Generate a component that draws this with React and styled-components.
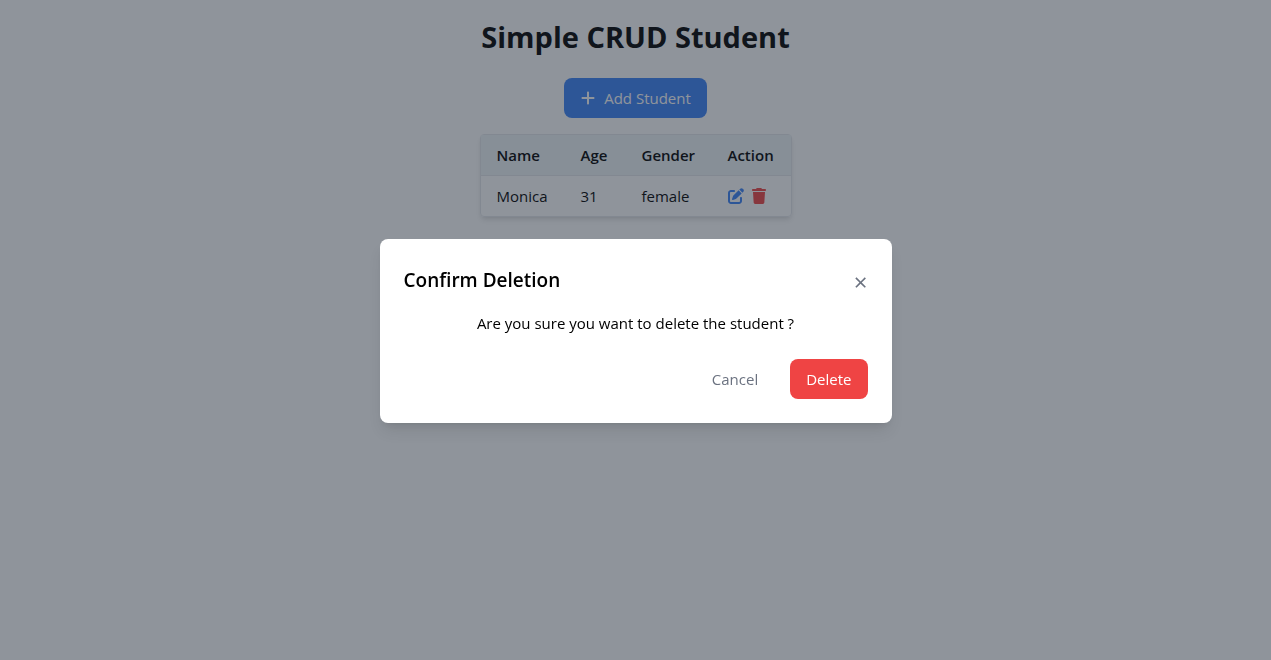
import React from "react";
import styled, { createGlobalStyle } from "styled-components";
import { FaPlus, FaPenToSquare, FaTrash } from "react-icons/fa6";

const GlobalStyle = createGlobalStyle`
  *, *::before, *::after { box-sizing: border-box; }
  body {
    margin: 0;
    background: #ffffff;
    color: #000000;
    font-family: "Segoe UI", "Open Sans", "Noto Sans", sans-serif;
    font-size: 15px;
    line-height: 24px;
  }
  h1, h2, p { margin: 0; }
  button { font: inherit; border: 0; cursor: pointer; }
`;

const Page = styled.main`
  display: flex;
  flex-direction: column;
  align-items: center;
  gap: 16px;
  padding: 16px;
`;

const PageTitle = styled.h1`
  margin-bottom: 4px;
  font-size: 29px;
  font-weight: 700;
  line-height: 42px;
`;

const Button = styled.button`
  display: inline-flex;
  align-items: center;
  gap: 8px;
  height: 40px;
  padding: 0 16px;
  border-radius: 8px;
  color: ${({ $color }) => $color || "#ffffff"};
  background: ${({ $background }) => $background || "transparent"};
`;

const StudentTable = styled.table`
  border-collapse: separate;
  border-spacing: 0;
  border: 1px solid #e5e7eb;
  border-radius: 4px;
  box-shadow: 0 4px 6px -1px rgba(0, 0, 0, 0.1), 0 2px 4px -2px rgba(0, 0, 0, 0.1);
`;

const HeadCell = styled.th`
  min-width: ${({ $width }) => $width}px;
  height: 41px;
  padding: 0 16px;
  border-bottom: 1px solid #e5e7eb;
  background: #eef4f7;
  font-weight: 600;
  text-align: left;
`;

const Cell = styled.td`
  height: 40px;
  padding: 0 16px;
`;

const Actions = styled.div`
  display: flex;
  gap: 8px;
`;

const IconButton = styled.button`
  display: flex;
  justify-content: center;
  width: ${({ $width }) => $width}px;
  padding: 0;
  background: none;
  color: ${({ $color }) => $color};
  svg { display: block; flex: none; width: 16px; height: 16px; }
`;

const Overlay = styled.div`
  position: fixed;
  inset: 0;
  display: flex;
  align-items: center;
  justify-content: center;
  padding-top: 2px;
  background: rgba(31, 41, 55, 0.5);
`;

const Dialog = styled.section`
  width: 100%;
  max-width: 512px;
  padding: 24px;
  border-radius: 8px;
  background: #ffffff;
  box-shadow: 0 10px 15px -3px rgba(0, 0, 0, 0.1), 0 4px 6px -4px rgba(0, 0, 0, 0.1);
`;

const DialogHeader = styled.header`
  display: flex;
  align-items: flex-end;
  justify-content: space-between;
  margin-bottom: 14px;
`;

const DialogTitle = styled.h2`
  font-size: 19px;
  font-weight: 600;
  line-height: 34px;
`;

const CloseButton = styled.button`
  padding: 0;
  background: none;
  color: #6b7280;
  font-size: 24px;
  line-height: 30px;
`;

const Message = styled.p`
  margin-bottom: 24px;
  text-align: center;
`;

const DialogActions = styled.footer`
  display: flex;
  justify-content: flex-end;
  gap: 16px;
`;

const students = [{ name: "Monica", age: 31, gender: "female" }];
const columns = [
  { label: "Name", width: 84 },
  { label: "Age", width: 61 },
  { label: "Gender", width: 86 },
  { label: "Action", width: 79 },
];

export default function App() {
  return (
    <>
      <GlobalStyle />
      <Page>
        <PageTitle>Simple CRUD Student</PageTitle>
        <Button type="button" $background="#3b82f6">
          <FaPlus size={16} />
          Add Student
        </Button>
        <StudentTable>
          <thead>
            <tr>
              {columns.map(({ label, width }) => (
                <HeadCell key={label} scope="col" $width={width}>{label}</HeadCell>
              ))}
            </tr>
          </thead>
          <tbody>
            {students.map((student) => (
              <tr key={student.name}>
                <Cell>{student.name}</Cell>
                <Cell>{student.age}</Cell>
                <Cell>{student.gender}</Cell>
                <Cell>
                  <Actions>
                    <IconButton type="button" aria-label="Edit student" $color="#3b82f6" $width={16}>
                      <FaPenToSquare />
                    </IconButton>
                    <IconButton type="button" aria-label="Delete student" $color="#ef4444" $width={14}>
                      <FaTrash />
                    </IconButton>
                  </Actions>
                </Cell>
              </tr>
            ))}
          </tbody>
        </StudentTable>
      </Page>
      <Overlay>
        <Dialog role="dialog" aria-modal="true" aria-labelledby="dialog-title">
          <DialogHeader>
            <DialogTitle id="dialog-title">Confirm Deletion</DialogTitle>
            <CloseButton type="button" aria-label="Close">×</CloseButton>
          </DialogHeader>
          <Message>Are you sure you want to delete the student ?</Message>
          <DialogActions>
            <Button type="button" $color="#6b7280">Cancel</Button>
            <Button type="button" $background="#ef4444">Delete</Button>
          </DialogActions>
        </Dialog>
      </Overlay>
    </>
  );
}
